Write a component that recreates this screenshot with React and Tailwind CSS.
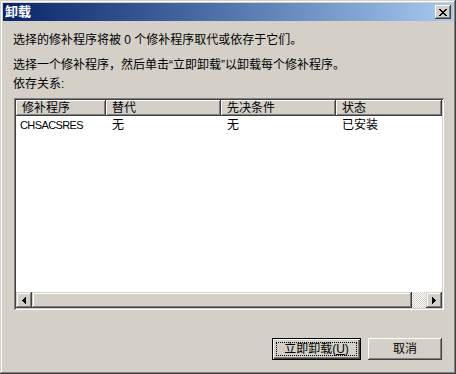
import React from "react";

const raised =
  "shadow-[inset_-1px_-1px_#404040,inset_1px_1px_#ffffff,inset_-2px_-2px_#808080,inset_2px_2px_#d4d0c8]";
const scrollBtn =
  "shadow-[inset_-1px_-1px_#404040,inset_1px_1px_#d4d0c8,inset_-2px_-2px_#808080,inset_2px_2px_#ffffff]";

function CloseX() {
  return (
    <svg width="8" height="7" viewBox="0 0 8 7" shapeRendering="crispEdges">
      <path
        fill="#000"
        d="M0 0h2v1H0zM6 0h2v1H6zM1 1h2v1H1zM5 1h2v1H5zM2 2h4v1H2zM3 3h2v1H3zM2 4h4v1H2zM1 5h2v1H1zM5 5h2v1H5zM0 6h2v1H0zM6 6h2v1H6z"
      />
    </svg>
  );
}

function Arrow({ dir }) {
  return (
    <svg width="4" height="7" viewBox="0 0 4 7" shapeRendering="crispEdges">
      {dir === "left" ? (
        <path fill="#000" d="M3 0h1v7H3zM2 1h1v5H2zM1 2h1v3H1zM0 3h1v1H0z" />
      ) : (
        <path fill="#000" d="M0 0h1v7H0zM1 1h1v5H1zM2 2h1v3H2zM3 3h1v1H3z" />
      )}
    </svg>
  );
}

const columns = [
  { label: "修补程序", w: "w-[90px]" },
  { label: "替代", w: "w-[115px]" },
  { label: "先决条件", w: "w-[115px]" },
  { label: "状态", w: "flex-1" },
];

export default function App() {
  return (
    <div className="w-[456px] h-[374px] bg-[#d4d0c8] p-[3px] flex flex-col text-black text-[12px] leading-[12px] font-['Liberation_Sans','Noto_Sans_CJK_SC',sans-serif] shadow-[inset_-1px_-1px_#404040,inset_1px_1px_#d4d0c8,inset_-2px_-2px_#808080,inset_2px_2px_#ffffff]">
      {/* title bar */}
      <div className="h-[18px] flex items-center justify-between pl-[2px] pr-[2px] bg-gradient-to-r from-[#0a246a] to-[#a6caf0]">
        <span className="text-white font-bold text-[13px]">卸载</span>
        <div className={`w-[16px] h-[14px] bg-[#d4d0c8] flex items-center justify-center ${raised}`}>
          <CloseX />
        </div>
      </div>

      <div className="flex flex-col flex-1 pl-[10px]">
        <p className="mt-[13px] whitespace-nowrap">选择的修补程序将被 0 个修补程序取代或依存于它们。</p>
        <p className="mt-[13px] whitespace-nowrap">选择一个修补程序，然后单击“立即卸载”以卸载每个修补程序。</p>
        <p className="mt-[7px]">依存关系:</p>

        {/* list view */}
        <div className="ml-[1px] mt-[8px] w-[430px] h-[212px] p-[2px] flex flex-col shadow-[inset_1px_1px_#808080,inset_-1px_-1px_#ffffff,inset_2px_2px_#404040,inset_-2px_-2px_#d4d0c8]">
          <div className="h-[16px] flex">
            {columns.map((c) => (
              <div key={c.label} className={`${c.w} h-full flex items-center pl-[6px] ${raised}`}>
                {c.label}
              </div>
            ))}
          </div>
          <div className="flex-1 bg-white">
            <div className="h-[17px] flex items-center">
              <div className="w-[90px] pl-[4px] text-[11px] tracking-[-0.6px]">CHSACSRES</div>
              <div className="w-[115px] pl-[6px]">无</div>
              <div className="w-[115px] pl-[6px]">无</div>
              <div className="flex-1 pl-[6px]">已安装</div>
            </div>
          </div>
          <div className="h-[16px] flex">
            <div className={`w-[16px] flex items-center justify-center bg-[#d4d0c8] ${scrollBtn}`}>
              <Arrow dir="left" />
            </div>
            <div className={`w-[380px] bg-[#d4d0c8] ${scrollBtn}`} />
            <div className="flex-1 bg-[repeating-conic-gradient(#ffffff_0_25%,#d4d0c8_0_50%)] bg-[length:2px_2px]" />
            <div className={`w-[16px] flex items-center justify-center bg-[#d4d0c8] ${scrollBtn}`}>
              <Arrow dir="right" />
            </div>
          </div>
        </div>

        {/* buttons */}
        <div className="mt-[28px] flex justify-end gap-[7px] pr-[11px]">
          <div className="w-[89px] h-[22px] border border-black p-[3px] shadow-[inset_1px_1px_#ffffff,inset_-1px_-1px_#404040,inset_-2px_-2px_#808080]">
            <div className="w-full h-full border border-dotted border-black flex items-center justify-center">
              立即卸载(<span className="underline">U</span>)
            </div>
          </div>
          <div className={`w-[74px] h-[22px] flex items-center justify-center ${raised}`}>取消</div>
        </div>
      </div>
    </div>
  );
}
